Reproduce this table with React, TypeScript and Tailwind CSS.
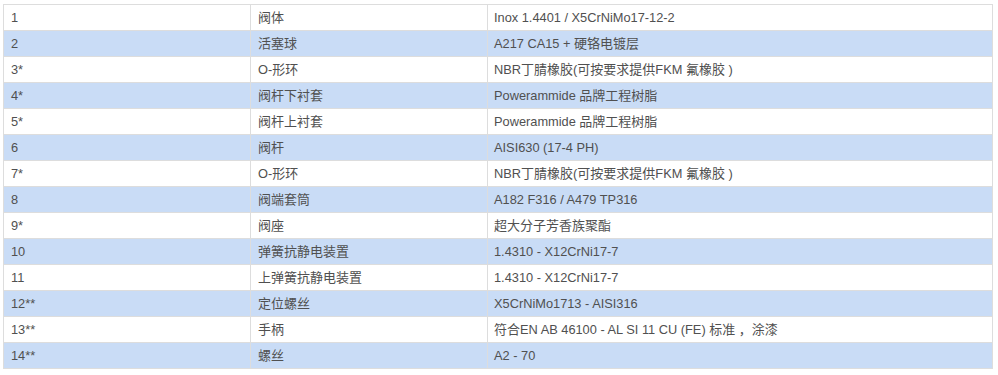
import React from 'react';

const rows: [string, string, string][] = [
  ['1', '阀体', 'Inox 1.4401 / X5CrNiMo17-12-2'],
  ['2', '活塞球', 'A217 CA15 + 硬铬电镀层'],
  ['3*', 'O-形环', 'NBR丁腈橡胶(可按要求提供FKM 氟橡胶 )'],
  ['4*', '阀杆下衬套', 'Powerammide 品牌工程树脂'],
  ['5*', '阀杆上衬套', 'Powerammide 品牌工程树脂'],
  ['6', '阀杆', 'AISI630 (17-4 PH)'],
  ['7*', 'O-形环', 'NBR丁腈橡胶(可按要求提供FKM 氟橡胶 )'],
  ['8', '阀端套筒', 'A182 F316 / A479 TP316'],
  ['9*', '阀座', '超大分子芳香族聚酯'],
  ['10', '弹簧抗静电装置', '1.4310 - X12CrNi17-7'],
  ['11', '上弹簧抗静电装置', '1.4310 - X12CrNi17-7'],
  ['12**', '定位螺丝', 'X5CrNiMo1713 - AISI316'],
  ['13**', '手柄', '符合EN AB 46100 - AL SI 11 CU (FE) 标准 ，涂漆'],
  ['14**', '螺丝', 'A2 - 70'],
];

// CJK runs are set a touch larger than the latin text, like the original page
const Mixed: React.FC<{ text: string }> = ({ text }) => (
  <>
    {text.split(/([\u3000-\u9fff\uff00-\uffef]+)/).map((part, i) =>
      i % 2 === 1 ? (
        <span key={i} className="text-[13px] leading-none">{part}</span>
      ) : (
        <React.Fragment key={i}>{part}</React.Fragment>
      )
    )}
  </>
);

const cell = 'h-[26px] border border-[#dddddd] py-0 leading-[14px] align-middle';

const App: React.FC = () => {
  return (
    <div className="bg-white w-[998px] h-[375px] pt-[4px] pl-[3px]">
      <table
        className="table-fixed border-collapse w-[990px] text-[12.8px] text-[#505050]"
        style={{ fontFamily: '"Liberation Sans", Arial, "Noto Sans CJK SC", sans-serif' }}
      >
        <colgroup>
          <col className="w-[247px]" />
          <col className="w-[237px]" />
          <col />
        </colgroup>
        <tbody>
          {rows.map(([no, part, material], i) => (
            <tr key={i} className={i % 2 === 1 ? 'bg-[#c9dcf6]' : 'bg-white'}>
              <td className={`${cell} px-[7px]`}>{no}</td>
              <td className={`${cell} px-[7px]`}>
                <Mixed text={part} />
              </td>
              <td className={`${cell} px-[6px]`}>
                <Mixed text={material} />
              </td>
            </tr>
          ))}
        </tbody>
      </table>
    </div>
  );
};

export default App;
